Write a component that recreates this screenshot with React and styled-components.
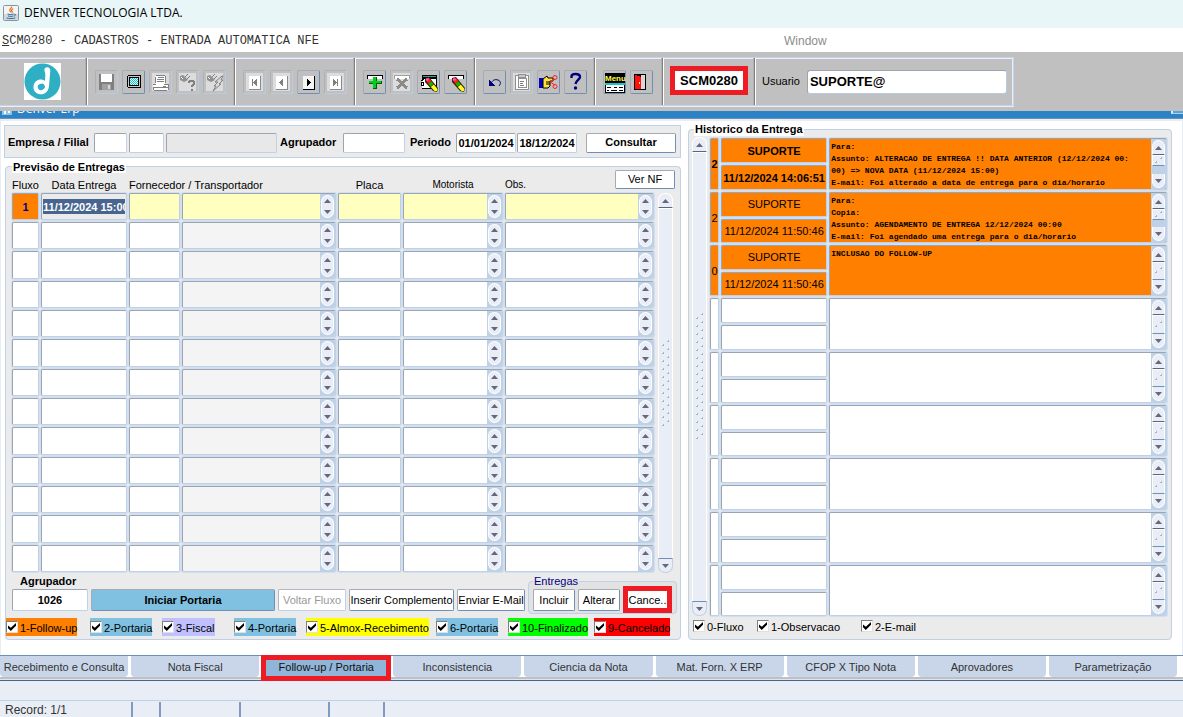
import React from 'react';
import styled, { createGlobalStyle, css } from 'styled-components';

const c = {
  silver: '#c0c0c0',
  panel: '#ebebeb',
  line: '#bfd1e6',
  edge: '#9aa5b1',
  pale: '#e9eef6',
  steel: '#6f8fb4',
  orange: '#ff8000',
  yellow: '#ffffc0',
  sky: '#80c0e0',
  red: '#ed1c24',
  navy: '#000080',
};

const sans = '"Liberation Sans", Arial, sans-serif';
const mono = '"Liberation Mono", "Courier New", monospace';

const Global = createGlobalStyle`
  *, *::before, *::after { box-sizing: border-box; }
  body { margin: 0; background: #fff; color: #000; font: 11px/13px ${sans}; }
  button, input, textarea { font: inherit; color: inherit; margin: 0; padding: 0; border-radius: 0; }
`;

const Page = styled.div`
  display: flex;
  flex-direction: column;
  min-height: 100vh;
`;

/* Window chrome */

const TitleBar = styled.header`
  display: flex;
  align-items: center;
  gap: 5px;
  height: 28px;
  padding: 0 3px 2px;
  background: #e8f6f8;
  font: 12px/16px "Open Sans", "Noto Sans", sans-serif;
`;

const MenuBar = styled.nav`
  display: flex;
  align-items: center;
  height: 24px;
  padding: 1px 2px 0;
  background: #fff;
`;

const MenuItem = styled.button`
  border: 0;
  background: none;
  color: #333;
  text-align: left;
  font: 12px/16px ${mono};
  flex: 782 1 0;
`;

const WindowItem = styled.button`
  border: 0;
  background: none;
  color: #8c8c8c;
  text-align: left;
  font: 12px/16px ${sans};
  flex: 397 1 0;
`;

const ToolbarArea = styled.div`
  height: 59px;
  padding-top: 5px;
  background: ${c.silver};
`;

const Toolbar = styled.div`
  display: inline-flex;
  height: 49px;
  border: 1px solid #c3d4ea;
  border-left: 0;
  box-shadow: inset 0 1px 0 #e8eff9, inset -1px 0 0 #e8eff9, 0 1px 0 #e8eff9;
`;

const ToolGroup = styled.div`
  display: flex;
  align-items: center;
  gap: 4px;
  padding: 0 ${p => p.$end || 7}px 0 7px;
  border-right: 1px solid #808080;
  box-shadow: inset -1px 0 0 #b0b0b0, 1px 0 0 #fff;
  margin-right: 1px;
  &:last-child { border-right: 0; box-shadow: none; margin-right: 0; gap: 7px; padding: 0 6px; }
`;

const LogoCell = styled(ToolGroup)`
  width: 87px;
  padding: 0 0 0 24px;
`;

const ToolButton = styled.button`
  width: 23px;
  height: 24px;
  border: 1px solid;
  border-radius: 2px;
  border-color: ${p => (p.disabled ? '#a9b1bb #b7cbe4 #b7cbe4 #a9b1bb' : '#a4abb4 #6f8fb4 #6f8fb4 #a4abb4')};
  background: ${p => (p.$pale ? '#dcdcdc' : c.silver)};
  box-shadow: ${p => (p.$pale ? `inset 0 0 0 2px ${c.silver}` : 'none')};
  svg { display: block; margin: -1px; }
`;

const CodeInput = styled.input`
  width: 78px;
  height: 29px;
  margin: -2px 0 0 -1px;
  border: 5px solid ${c.red};
  background: #fff;
  text-align: center;
  font: bold 13px/16px ${sans};
`;

const UserInput = styled.input`
  width: 200px;
  height: 24px;
  padding: 0 2px;
  border: 1px solid;
  border-color: ${c.edge} #b7cbe4 #b7cbe4 ${c.edge};
  border-radius: 3px;
  background: #fff;
  font: bold 13px/16px ${sans};
`;

const ErpBar = styled.div`
  display: flex;
  justify-content: space-between;
  height: 8px;
  overflow: hidden;
  border-bottom: 1px solid ${c.steel};
  background: #2b82c4;
  color: #fff;
`;

const ErpTitle = styled.span`
  display: flex;
  gap: 5px;
  margin-top: -10px;
  padding-left: 2px;
  font: 12px/16px "Open Sans", "Noto Sans", sans-serif;
`;

const ErpButton = styled.button`
  width: 12px;
  height: 3px;
  border: 0;
  border-bottom: 1px solid #a9d2ec;
  border-left: 2px solid #d9ecf8;
  background: #5aa3d6;
`;

/* Panels */

const Main = styled.main`
  flex: 1;
  display: grid;
  grid-template-columns: minmax(0, 677fr) minmax(0, 484fr);
  gap: 7px;
  padding: 4px 10px 15px 3px;
  border: solid ${c.pale};
  border-width: 2px 1px 0;
`;

const Column = styled.div`
  display: flex;
  flex-direction: column;
  gap: 2px;
  margin-top: ${p => (p.$raised ? -2 : 0)}px;
`;

const SearchForm = styled.form`
  display: flex;
  align-items: center;
  height: 33px;
  padding: 2px 4px 0 3px;
  border: 1px solid ${c.line};
  background: ${c.panel};
  font-weight: bold;
`;

const Field = styled.input`
  min-width: 0;
  height: ${p => p.$tall ? 22 : 20}px;
  padding: 0 1px;
  border: 1px solid;
  border-color: ${c.edge} ${c.line} ${c.line} ${c.edge};
  border-radius: 2px;
  background: ${p => (p.readOnly ? '#e8e8e8' : '#fff')};
  font-weight: bold;
  text-align: ${p => p.$center ? 'center' : 'left'};
  flex: ${p => p.$w ? `${p.$w} 1 ${p.$w}px` : 'none'};
  margin-right: ${p => p.$gap || 0}px;
`;

const SearchLabel = styled.label`
  flex: 0 0 ${p => p.$w}px;
  white-space: nowrap;
`;

const Button = styled.button`
  height: ${p => p.$h || 22}px;
  flex: ${p => p.$w ? `${p.$w} 1 ${p.$w}px` : 'none'};
  width: ${p => (p.$width ? `${p.$width}px` : 'auto')};
  min-width: 0;
  overflow: hidden;
  border: 1px solid;
  border-color: #a4abb4 ${c.steel} ${c.steel} #a4abb4;
  border-radius: 2px;
  background: ${p => p.$bg || '#fff'};
  font-weight: ${p => (p.$bold ? 'bold' : 'normal')};
  white-space: nowrap;
  &:disabled { color: #999; border-color: #b0b8c2 ${c.line} ${c.line} #b0b8c2; }
  ${p => p.$marked && css`
    height: 27px;
    margin: -3px 0 -2px;
    padding-top: 2px;
    border: 5px solid ${c.red};
    border-radius: 0;
  `}
`;

const Group = styled.fieldset`
  flex: 1;
  display: block;
  min-width: 0;
  margin: 0 0 0 ${p => p.$inset || 0}px;
  padding: 0 ${p => p.$right}px 1px ${p => p.$left}px;
  border: 1px solid ${c.line};
  border-radius: 4px;
  background: ${c.panel};
`;

const Legend = styled.legend`
  height: 13px;
  margin-left: 2px;
  padding: 0 1px;
  background: #fff;
  font-weight: bold;
  line-height: ${p => p.$line || 13}px;
`;

const DeliveryArea = styled.div`
  display: grid;
  margin-top: -3px;
  > * { grid-area: 1 / 1; }
  > button { justify-self: end; align-self: start; }
`;

const TableRow = styled.div`
  display: flex;
  gap: ${p => p.$gap}px;
  padding-right: ${p => p.$end || 0}px;
`;

const Table = styled.table`
  flex: 1;
  width: 100%;
  min-width: 0;
  table-layout: fixed;
  border-collapse: separate;
  border-spacing: 2px;
  th {
    height: 19px;
    padding: 0;
    vertical-align: bottom;
    font-weight: normal;
    line-height: 12px;
    white-space: nowrap;
    text-align: center;
  }
  td { height: ${p => p.$row}px; padding: 0; }
  tbody tr:nth-child(${p => p.$tallRows}) td { height: ${p => p.$row + 1}px; }
`;

const Head = styled.th`
  && { text-align: ${p => p.$left ? 'left' : 'center'}; }
  font-size: ${p => p.$small ? 10 : 11}px;
`;

const cellBox = css`
  border: 1px solid;
  border-color: ${c.edge} ${c.line} ${c.line} ${c.edge};
  border-radius: 2px;
  box-shadow: 0 0 0 1px #d3dfee;
  background-color: ${p => p.$bg || '#fff'};
`;

const CellInput = styled.input`
  ${cellBox}
  display: block;
  width: 100%;
  height: 100%;
  padding: ${p => (p.$selected ? '5px 1px' : '0')};
  color: ${p => p.$color || '#000'};
  font-weight: ${p => (p.$bold ? 'bold' : 'normal')};
  text-align: ${p => (p.$selected ? 'left' : 'center')};
  ${p => p.$selected && css`
    background-image: linear-gradient(#48658f, #48658f);
    background-clip: content-box, border-box;
    background-origin: content-box;
    background-repeat: no-repeat;
  `}
`;

const MemoBox = styled.div`
  ${cellBox}
  display: flex;
  width: 100%;
  height: 100%;
  overflow: hidden;
`;

const Memo = styled.textarea`
  flex: 1;
  min-width: 0;
  height: 100%;
  padding: 2px 1px;
  border: 0;
  background: none;
  resize: none;
  overflow: hidden;
  white-space: pre;
  font: bold 8px/12px ${mono};
`;

const Spinner = styled.div`
  display: flex;
  flex-direction: column;
  width: 15px;
  padding: 1px;
  background: ${c.line};
`;

const ArrowButton = styled.button`
  display: flex;
  align-items: center;
  justify-content: center;
  width: 100%;
  flex: ${p => p.$h ? `0 0 ${p.$h}px` : '1'};
  min-height: 0;
  border: 1px solid #fff;
  background: ${c.pale};
  border-radius: ${p => p.$down ? '0 0 7px 7px' : '7px 7px 0 0'};
  ${p => p.$down ? 'border-top-width: 0;' : 'border-bottom-width: 0;'}
  ${p => p.$bar && !p.$down && 'border-bottom: 1px solid #62627c;'}
  ${p => p.$bar && p.$down && `border-top: 1px solid ${c.steel}; border-color: ${c.steel} ${c.line} ${c.line};`}
`;

const Track = styled.div`
  display: flex;
  flex-direction: column;
  flex: 0 0 15px;
  margin: ${p => p.$top}px 0 ${p => p.$bottom}px;
`;

const Thumb = styled.div`
  flex: 1;
  display: flex;
  align-items: center;
  justify-content: center;
  min-height: 0;
  border: solid #fff;
  border-width: 1px 1px 0;
  background: ${c.pale};
`;

const MiniThumb = styled(Thumb)`
  flex: ${p => (p.$short ? '0 0 11px' : '1')};
  border-bottom: 1px solid ${c.steel};
  margin-bottom: ${p => (p.$short ? 'auto' : 0)};
`;

const Stack = styled.div`
  display: grid;
  grid-template-rows: 1fr 1fr;
  gap: 2px;
  height: 100%;
`;

const Actions = styled.div`
  display: flex;
  align-items: flex-end;
  gap: 3px;
  margin: 0 -2px 0 2px;
  padding-top: 1px;
  > button, > div { margin-bottom: 3px; }
`;

const Stacked = styled.div`
  flex: 76 1 76px;
  min-width: 0;
  display: flex;
  flex-direction: column;
  font-weight: bold;
  label { padding: 0 0 1px 8px; }
`;

const DeliveryGroup = styled.fieldset`
  flex: 149 1 149px;
  min-width: 0;
  margin: 0;
  padding: 1px 4px 2px;
  border: 1px solid ${c.line};
  border-radius: 4px;
  background: #e2e2e2;
  legend { height: 13px; padding: 0 1px; color: ${c.navy}; }
  > div { display: flex; gap: 3px; }
`;

const Checks = styled.div`
  display: grid;
  grid-template-columns: ${p => p.$cols};
  margin: ${p => p.$m};
`;

const CheckLabel = styled.label`
  justify-self: start;
  display: flex;
  align-items: center;
  gap: 2px;
  height: 18px;
  background: ${p => p.$bg || 'transparent'};
  white-space: nowrap;
  padding-top: 2px;
`;

const CheckBox = styled.input`
  appearance: none;
  position: relative;
  width: 12px;
  height: 12px;
  margin-bottom: 2px;
  border: 1px solid;
  border-color: #808080 #e0e0e0 #e0e0e0 #808080;
  background: #fff;
  &:checked::after {
    content: '';
    position: absolute;
    inset: 1px;
    background: #000;
    clip-path: polygon(0 30%, 35% 60%, 100% 0, 100% 35%, 35% 100%, 0 65%);
  }
`;

/* Tabs and status line */

const TabStrip = styled.nav`
  display: grid;
  grid-template-columns: repeat(9, minmax(0, 1fr));
  gap: 3px;
  height: 26px;
  padding: 0 6px 3px 0;
  border-top: 1px solid ${c.steel};
  border-bottom: 1px solid #48658f;
  background: linear-gradient(#fff 21px, ${c.silver} 21px, ${c.silver} 23px, #dde5f0 23px);
`;

const Tab = styled.button`
  padding-top: 2px;
  border: 0;
  border-radius: 0 0 4px 4px;
  background: #c9d6e9;
  color: #333;
  white-space: nowrap;
  ${p => p.$active && css`
    z-index: 1;
    margin: -1px -1px -4px;
    padding: 0 0 2px;
    border: 5px solid ${c.red};
    border-radius: 0;
    background: #90b5d8;
    color: #111;
  `}
`;

const StatusBar = styled.footer`
  height: 36px;
  padding-top: 19px;
  background: ${c.pale};
`;

const StatusLine = styled.div`
  display: flex;
  height: 17px;
  padding: 1px 0 0 5px;
  border-top: 1px solid ${c.line};
  color: #333;
  font: 12px/16px ${sans};
`;

const StatusCell = styled.span`
  width: ${p => p.$w}px;
  border-right: 2px solid #7f9bbd;
`;

/* Drawings */

const JavaIcon = () => (
  <svg width="16" height="16" viewBox="0 0 16 16" aria-hidden="true">
    <rect x=".5" y=".5" width="15" height="15" rx="1" fill="#f4f4f4" stroke="#8b949c" />
    <path d="M1 9h14v6H1z" fill="#cfd8de" />
    <path d="M8.600 1.500c.8 1.600-2.600 2.400-1.800 4 .4.8 1 1.200 1 1.800M10.200 3.800c-1.400.7-2.200 1.500-1.200 2.700.4.5.2 1-.1 1.300" fill="none" stroke="#e07020" strokeWidth="1.200" />
    <path d="M4.500 9c2 .6 4.800.6 6.300 0M5 11c1.800.5 4 .5 5.300 0M3.500 13c2.500.8 6.500.8 8.800-.1M11.200 9.200c1.700-.5 2 1.200-.2 2" fill="none" stroke="#2f6d96" />
  </svg>
);

const Logo = () => (
  <svg width="37" height="37" viewBox="0 0 37 37" role="img" aria-label="Denver">
    <rect width="37" height="37" fill="#fff" />
    <circle cx="18.500" cy="18.500" r="18" fill="#2fafc3" />
    <path d="M22 4.500c2-1 4.500.6 4.300 3.500L25 23c-.5 5.500-4.300 8.800-8.800 8.300-4.300-.4-7.200-3.700-6.700-8 .5-4.500 4.500-7.300 8.800-6.600 1.200.2 2 .5 2.700 1l.3-5c.2-2.600-.5-3.700-.9-5.200-.3-1.500.4-2.500 1.600-3z" fill="#fff" />
    <ellipse cx="17.300" cy="23.800" rx="3.600" ry="3.200" fill="#2fafc3" transform="rotate(-25 17.300 23.800)" />
  </svg>
);

const Arrow = ({ down }) => (
  <svg width="7" height="4" viewBox="0 0 7 4" aria-hidden="true">
    <path d={down ? 'M0 0h7L3.500 4z' : 'M0 4h7L3.500 0z'} fill="#666680" />
  </svg>
);

const Grip = ({ rows }) => (
  <svg width="9" height={rows * 8} viewBox={`0 0 9 ${rows * 8}`} shapeRendering="crispEdges" aria-hidden="true">
    {Array.from({ length: rows }, (_, i) => (
      <g key={i}>
        <path d={`M6 ${i * 8}h1v1h-1zM1 ${i * 8 + 4}h1v1h-1z`} fill="#fff" />
        <path d={`M7 ${i * 8}h1v2h-1zM6 ${i * 8 + 1}h1v1h-1zM2 ${i * 8 + 4}h1v2h-1zM1 ${i * 8 + 5}h1v1h-1z`} fill="#9db6d2" />
      </g>
    ))}
  </svg>
);

const NavGlyph = ({ on, d }) => (
  <>
    <path d="M6 6h12v14H6z" fill={on ? '#000' : '#8a8a8a'} />
    <path d="M6 6h11v13H6z" fill={on ? '#f4f4f4' : '#fff'} />
    <path d={d} fill={on ? '#000' : '#808080'} />
  </>
);

const Marker = () => (
  <g shapeRendering="auto">
    <path d="M8 8l4-1 9 11-1 4-4-1L8 12z" fill="#402000" />
    <path d="M8.500 9.500l3-2 3 4-3 2.500z" fill="#ff2020" />
    <path d="M9 8.500h2.500v2H9z" fill="#ff60ff" />
    <path d="M11.500 14l3-2.500 2 2.500-3 2.500z" fill="#00c000" />
    <path d="M13.800 17l3-2.500 3.700 4.500-.8 2.200-2.200-.2z" fill="#ffff20" />
  </g>
);

const Wand = () => (
  <g shapeRendering="auto">
    <path d="M4 6l3-1 5 5-4 2-4-2z" fill="#909090" />
    <path d="M9 7l3-3M11 9l3-3" stroke="#808080" fill="none" />
    <path d="M5 7l2 2" stroke="#fff" fill="none" />
  </g>
);

const glyphs = {
  save: (
    <>
      <path d="M4 4h15v16H4z" fill="#808080" />
      <path d="M6 4h11v8H6z" fill="#fff" />
      <path d="M7 14h9v6H7z" fill="#a0a0a0" />
      <path d="M13 15h2v4h-2z" fill="#d8d8d8" />
    </>
  ),
  screen: (
    <>
      <path d="M6 5h12l1 1v11l-1 1H6l-1-1V6z" fill="#000" />
      <path d="M6 6h12v11H6z" fill="#c8c8c8" />
      <path d="M7 7h10v9H7z" fill="#000" />
      <path d="M8 8h8v7H8z" fill="#d8ffff" />
      <path d="M8 8.500h8M8 10.500h8M8 12.500h8M8 14.500h8" stroke="#20c0c8" strokeDasharray="1 1" fill="none" />
      <path d="M9 9.500h7M9 11.500h7M9 13.500h7" stroke="#20c0c8" strokeDasharray="1 1" fill="none" />
    </>
  ),
  print: (
    <>
      <path d="M7 5h9v9H6V7z" fill="#fff" />
      <path d="M6.500 13V7M7 5.500h9M16.500 6v7M9 7.500h6M8 9.500h7M8 11.500h7" stroke="#808080" fill="none" />
      <path d="M4 14h15v6H4z" fill="#fff" />
      <path d="M4 14.500h3M15 14.500h4M4 17.500h15M5 20.500h13M19.500 14v6M4.500 18v2" stroke="#808080" fill="none" />
      <path d="M14 16h3v1h-3z" fill="#808080" />
    </>
  ),
  help: (
    <>
      <Wand />
      <path d="M13 13v-1l1-1h3l1 1v2l-2 2v1" fill="none" stroke="#808080" strokeWidth="2" />
      <path d="M15 19h2v2h-2z" fill="#808080" />
    </>
  ),
  bolt: (
    <>
      <Wand />
      <path d="M19 6l-7 6h3l-4 4h2l-3 5 8-7h-2l4-4h-2l2-4z" fill="#dcdcdc" stroke="#808080" shapeRendering="auto" />
    </>
  ),
  first: <NavGlyph d="M9 9h1v7H9zM14 9v7l-4-3.500z" />,
  prev: <NavGlyph d="M13 9v7l-4-3.500z" />,
  next: <NavGlyph on d="M10 8v9l4-4.500z" />,
  last: <NavGlyph d="M9 9v7l4-3.500zM13 9h1v7h-1z" />,
  add: (
    <>
      <path d="M4 5h16v4H4z" fill="#000" />
      <path d="M5 6h14v3H5z" fill="#fff" />
      <path d="M10 7h4v4h5v3h-5v5h-4v-5H6v-3h4z" fill="#006000" />
      <path d="M10 7h3v4h5v2h-5v5h-3v-5H6v-2h4z" fill="#00d020" />
    </>
  ),
  remove: (
    <>
      <path d="M4 5h16v4H4z" fill="#a0a0a0" />
      <path d="M5 6h14v3H5z" fill="#fff" />
      <path d="M7 9l10 9M17 9L7 18" stroke="#8a8a8a" strokeWidth="3" />
    </>
  ),
  query: (
    <>
      <path d="M5 5h15v4H5z" fill="#000" />
      <path d="M6 6h13v1H6z" fill="#20a0a0" />
      <path d="M5 9h15v10H5z" fill="#fff" />
      <path d="M4.500 11l2-2M19.500 8v11M5 18.500h15M4 12h2v3H4z" stroke="#000" fill="none" />
      <Marker />
    </>
  ),
  clear: (
    <>
      <path d="M4 5h16v4H4z" fill="#000" />
      <path d="M5 6h14v3H5z" fill="#fff" />
      <Marker />
    </>
  ),
  undo: (
    <>
      <path d="M8 14c1-4 4-5 7-4s3 4 1 6" fill="none" stroke="#000080" shapeRendering="auto" />
      <path d="M6 10l6 6H6z" fill="#000080" />
    </>
  ),
  paste: (
    <>
      <path d="M5 5h13v14H5z" fill="#fff" stroke="#909090" />
      <path d="M8 8h8v9H8z" fill="#fff" stroke="#909090" />
      <path d="M8 4h7v3H8z" fill="#c8c8c8" stroke="#909090" />
      <path d="M10 11h4M10 13h3M10 15h4" stroke="#808080" fill="none" />
    </>
  ),
  hand: (
    <g shapeRendering="auto">
      <path d="M2 8h4v10H2z" fill="#0000c0" />
      <path d="M6 9l4-3 1 2h5v3h-3v5l-2 2H6z" fill="#ffe040" stroke="#000" />
      <path d="M9 12h5M9 14h4" stroke="#000" fill="none" />
      <path d="M13 12l5-3M13 12l5 3" fill="none" stroke="#ff2020" />
      <circle cx="18" cy="7.500" r="2" fill="none" stroke="#ff2020" />
      <circle cx="18" cy="16.500" r="2" fill="none" stroke="#ff2020" />
    </g>
  ),
  question: (
    <g shapeRendering="auto">
      <path d="M7.500 8V6.500c0-1.500 1.500-2.500 4-2.500s4.500 1 4.500 3c0 2.500-4 3.500-4.500 7" fill="none" stroke="#000080" strokeWidth="2.400" />
      <circle cx="11.500" cy="18" r="1.700" fill="#000080" />
    </g>
  ),
  menu: (
    <>
      <path d="M2 3h20v10H2z" fill="#000" />
      <text x="2" y="11" fill="#ffff40" fontSize="8" fontWeight="bold" fontFamily="Liberation Sans, sans-serif">Menu</text>
      <path d="M2 13h20v2H2z" fill="#20c0c8" />
      <path d="M2 15h20v8H2z" fill="#fff" />
      <path d="M4 17.500h4M11 17.500h3M16 17.500h4M4 20.500h2M8 20.500h6M16 20.500h4" stroke="#000" fill="none" />
      <path d="M2.500 15v7.500h19V15" stroke="#000" fill="none" />
    </>
  ),
  exit: (
    <>
      <path d="M4 4h12v16H4z" fill="#000" />
      <path d="M11 5h4v14h-4z" fill="#d8d8d8" />
      <path d="M5 5l6 2v12l-6 0z" fill="#ff1010" />
      <path d="M9 12h1v2H9z" fill="#ffff40" />
    </>
  ),
};

const toolGroups = [
  { end: 8, tools: [['save', 'Salvar', 'off'], ['screen', 'Tela'], ['print', 'Imprimir', 'pale'], ['help', 'Entrar consulta', 'pale'], ['bolt', 'Executar consulta', 'pale']] },
  { end: 7, tools: [['first', 'Primeiro', 'pale'], ['prev', 'Anterior', 'pale'], ['next', 'Proximo'], ['last', 'Ultimo', 'pale']] },
  { end: 7, tools: [['add', 'Inserir registro'], ['remove', 'Remover registro', 'pale'], ['query', 'Limpar bloco'], ['clear', 'Limpar registro']] },
  { end: 7, tools: [['undo', 'Desfazer'], ['paste', 'Colar', 'pale'], ['hand', 'Lista'], ['question', 'Ajuda']] },
  { end: 9, tools: [['menu', 'Menu'], ['exit', 'Sair']] },
];

const Tool = ({ name, label, state }) => (
  <ToolButton type="button" aria-label={label} disabled={!!state} $pale={state === 'pale'}>
    <svg width="23" height="24" viewBox="0 0 23 24" shapeRendering="crispEdges" aria-hidden="true">{glyphs[name]}</svg>
  </ToolButton>
);

const ScrollTrack = ({ top, bottom, rows }) => (
  <Track $top={top} $bottom={bottom}>
    <ArrowButton type="button" aria-label="Rolar para cima" $h={15} $bar><Arrow /></ArrowButton>
    <Thumb><Grip rows={rows} /></Thumb>
    <ArrowButton type="button" aria-label="Rolar para baixo" $h={15} $bar $down><Arrow down /></ArrowButton>
  </Track>
);

const SpinMemo = ({ label, bg }) => (
  <MemoBox $bg={bg}>
    <Memo aria-label={label} rows={1} />
    <Spinner>
      <ArrowButton type="button" aria-label={`${label} acima`}><Arrow /></ArrowButton>
      <ArrowButton type="button" aria-label={`${label} abaixo`} $down><Arrow down /></ArrowButton>
    </Spinner>
  </MemoBox>
);

const Check = ({ text, bg }) => (
  <CheckLabel $bg={bg}><CheckBox type="checkbox" defaultChecked />{text}</CheckLabel>
);

const DeliveryRow = ({ first }) => {
  const bg = first ? c.yellow : '#fff';
  return (
    <tr>
      <td><CellInput aria-label="Fluxo" defaultValue={first ? '1' : ''} $bg={first ? c.orange : '#fff'} $color={c.navy} $bold /></td>
      <td><CellInput aria-label="Data Entrega" defaultValue={first ? '11/12/2024 15:00' : ''} $bg={bg} $color="#fff" $bold $selected={first} /></td>
      <td><CellInput aria-label="Fornecedor" $bg={bg} /></td>
      <td><SpinMemo label="Transportador" bg={first ? c.yellow : '#f4f4f4'} /></td>
      <td><CellInput aria-label="Placa" $bg={bg} /></td>
      <td><SpinMemo label="Motorista" bg={bg} /></td>
      <td><SpinMemo label="Obs." bg={bg} /></td>
    </tr>
  );
};

const history = [
  {
    kind: '2', date: '11/12/2024 14:06:51', bold: true, long: true,
    text: 'Para:\nAssunto: ALTERACAO DE ENTREGA !! DATA ANTERIOR (12/12/2024 00:\n00) => NOVA DATA (11/12/2024 15:00)\nE-mail: Foi alterado a data de entrega para o dia/horario',
  },
  {
    kind: '2', date: '11/12/2024 11:50:46', long: true,
    text: 'Para:\nCopia:\nAssunto: AGENDAMENTO DE ENTREGA 12/12/2024 00:00\nE-mail: Foi agendado uma entrega para o dia/horario',
  },
  { kind: '0', date: '11/12/2024 11:50:46', text: 'INCLUSAO DO FOLLOW-UP' },
  {}, {}, {}, {}, {}, {},
];

const HistoryRow = ({ item }) => {
  const bg = item.kind ? c.orange : '#fff';
  return (
    <tr>
      <td><CellInput aria-label="Tipo" defaultValue={item.kind} $bg={bg} $bold={item.bold} /></td>
      <td>
        <Stack>
          <CellInput aria-label="Usuario" defaultValue={item.kind && 'SUPORTE'} $bg={bg} $bold={item.bold} />
          <CellInput aria-label="Data" defaultValue={item.date} $bg={bg} $bold={item.bold} />
        </Stack>
      </td>
      <td>
        <MemoBox $bg={bg}>
          <Memo aria-label="Mensagem" defaultValue={item.text} />
          <Spinner>
            <ArrowButton type="button" aria-label="Mensagem acima" $h={15} $bar><Arrow /></ArrowButton>
            <MiniThumb $short={item.long}><Grip rows={1} /></MiniThumb>
            <ArrowButton type="button" aria-label="Mensagem abaixo" $h={14} $down><Arrow down /></ArrowButton>
          </Spinner>
        </MemoBox>
      </td>
    </tr>
  );
};

const flows = [
  ['1-Follow-up', c.orange], ['2-Portaria', c.sky], ['3-Fiscal', '#c0c0ff'], ['4-Portaria', c.sky],
  ['5-Almox-Recebimento', '#ffff00'], ['6-Portaria', c.sky], ['10-Finalizado', '#00ff00'], ['9-Cancelado', '#ff0000'],
];

const tabs = [
  'Recebimento e Consulta', 'Nota Fiscal', 'Follow-up / Portaria', 'Inconsistencia', 'Ciencia da Nota',
  'Mat. Forn. X ERP', 'CFOP X Tipo Nota', 'Aprovadores', 'Parametrização',
];

export default function App() {
  return (
    <Page>
      <Global />
      <TitleBar><JavaIcon />DENVER TECNOLOGIA LTDA.</TitleBar>
      <MenuBar>
        <MenuItem type="button"><u>S</u>CM0280 - CADASTROS - ENTRADA AUTOMATICA NFE</MenuItem>
        <WindowItem type="button">Window</WindowItem>
      </MenuBar>
      <ToolbarArea>
        <Toolbar>
          <LogoCell><Logo /></LogoCell>
          {toolGroups.map(({ end, tools }, i) => (
            <ToolGroup key={i} $end={end}>
              {tools.map(([name, label, state]) => <Tool key={name} name={name} label={label} state={state} />)}
            </ToolGroup>
          ))}
          <ToolGroup $end={6}><CodeInput aria-label="Programa" defaultValue="SCM0280" /></ToolGroup>
          <ToolGroup>
            <label htmlFor="usuario">Usuario</label>
            <UserInput id="usuario" defaultValue="SUPORTE@" />
          </ToolGroup>
        </Toolbar>
      </ToolbarArea>
      <ErpBar>
        <ErpTitle>
          <svg width="10" height="16" viewBox="0 0 10 16" aria-hidden="true">
            <path d="M0 2h10v12H0z" fill="#8cc4ea" />
            <path d="M2 9h2v4H2zM6 9h2v3H6z" fill="#fff" />
          </svg>
          Denver Erp
        </ErpTitle>
        <ErpButton type="button" aria-label="Minimizar" />
      </ErpBar>

      <Main>
        <Column>
          <SearchForm onSubmit={e => e.preventDefault()}>
            <SearchLabel $w={86} htmlFor="empresa">Empresa / Filial</SearchLabel>
            <Field id="empresa" $w={33} $gap={2} />
            <Field aria-label="Filial" $w={35} $gap={2} />
            <Field aria-label="Nome da filial" readOnly $w={111} $gap={3} />
            <SearchLabel $w={63} htmlFor="agrupador">Agrupador</SearchLabel>
            <Field id="agrupador" $w={62} $gap={5} />
            <SearchLabel $w={46} htmlFor="inicio">Periodo</SearchLabel>
            <Field id="inicio" defaultValue="01/01/2024" $w={60} $gap={1} $center />
            <Field aria-label="Periodo final" defaultValue="18/12/2024" $w={60} $gap={9} $center />
            <Button type="submit" $w={90} $h={20} $bold>Consultar</Button>
          </SearchForm>

          <Group $inset={1} $left={4} $right={5}>
            <Legend $line={15}>Previsão de Entregas</Legend>
            <DeliveryArea>
              <TableRow $gap={2} $end={2}>
                <Table $row={27} $tallRows="3n">
                  <colgroup>
                    {[27, 86, 51, 154, 63, 100, 149].map((w, i) => <col key={i} width={w} />)}
                  </colgroup>
                  <thead>
                    <tr>
                      <Head>Fluxo</Head>
                      <Head>Data Entrega</Head>
                      <Head colSpan={2} $left>Fornecedor / Transportador</Head>
                      <Head>Placa</Head>
                      <Head $small>Motorista</Head>
                      <Head $small $left>Obs.</Head>
                    </tr>
                  </thead>
                  <tbody>
                    {Array.from({ length: 13 }, (_, i) => <DeliveryRow key={i} first={i === 0} />)}
                  </tbody>
                </Table>
                <ScrollTrack top={23} bottom={1} rows={11} />
              </TableRow>
              <Button type="button" $width={60} $h={19}>Ver NF</Button>
            </DeliveryArea>
            <Actions>
              <Stacked>
                <label htmlFor="grupo">Agrupador</label>
                <Field id="grupo" defaultValue="1026" $tall $center />
              </Stacked>
              <Button type="button" $w={184} $bg={c.sky} $bold>Iniciar Portaria</Button>
              <Button type="button" $w={68} disabled>Voltar Fluxo</Button>
              <Button type="button" $w={105}>Inserir Complemento</Button>
              <Button type="button" $w={68}>Enviar E-Mail</Button>
              <DeliveryGroup>
                <legend>Entregas</legend>
                <div>
                  <Button type="button" $w={42}>Incluir</Button>
                  <Button type="button" $w={42}>Alterar</Button>
                  <Button type="button" $w={49} $marked>Cance..</Button>
                </div>
              </DeliveryGroup>
            </Actions>
            <Checks $cols="84px 72px 72px 72px 130px 72px 86px 1fr" $m="4px 0 0 -4px">
              {flows.map(([text, bg]) => <Check key={text} text={text} bg={bg} />)}
            </Checks>
          </Group>
        </Column>

        <Column $raised>
          <Group $left={3} $right={2}>
            <Legend>Historico da Entrega</Legend>
            <TableRow $gap={1}>
              <ScrollTrack top={1} bottom={2} rows={16} />
              <Table $row={51} $tallRows="3n+1">
                <colgroup>
                  {[9, 106, 337].map(w => <col key={w} width={w} />)}
                </colgroup>
                <tbody>{history.map((item, i) => <HistoryRow key={i} item={item} />)}</tbody>
              </Table>
            </TableRow>
            <Checks $cols="64px 104px 1fr" $m="-1px 0 0 1px">
              {['0-Fluxo', '1-Observacao', '2-E-mail'].map(text => <Check key={text} text={text} />)}
            </Checks>
          </Group>
        </Column>
      </Main>

      <TabStrip>
        {tabs.map((text, i) => <Tab key={text} type="button" $active={i === 2}>{text}</Tab>)}
      </TabStrip>
      <StatusBar>
        <StatusLine>
          <StatusCell $w={128}>Record: 1/1</StatusCell>
          {[28, 80, 89, 55].map(w => <StatusCell key={w} $w={w} />)}
        </StatusLine>
      </StatusBar>
    </Page>
  );
}
